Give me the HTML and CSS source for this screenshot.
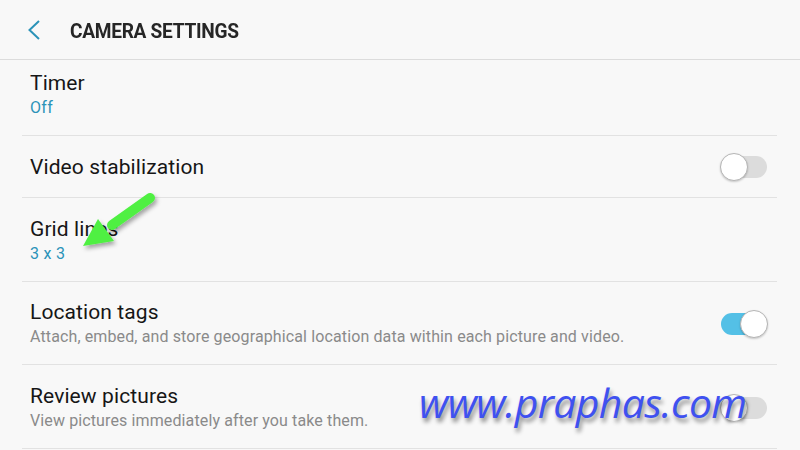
FILE: index.html
```html
<!DOCTYPE html>
<html>
<head>
<meta charset="utf-8">
<link rel="stylesheet" href="styles.css">
</head>
<body>
<div class="screen">
  <header class="appbar">
    <svg class="back" width="14" height="20" viewBox="0 0 14 20"><path d="M12 1 L2.5 10 L12 19" fill="none" stroke="#2b93b8" stroke-width="2"/></svg>
    <h1 class="title">CAMERA SETTINGS</h1>
  </header>
  <div class="list">
    <div class="row first">
      <div class="text">
        <div class="label">Timer</div>
        <div class="value">Off</div>
      </div>
    </div>
    <div class="row single">
      <div class="text">
        <div class="label">Video stabilization</div>
      </div>
      <span class="toggle"><span class="thumb"></span></span>
    </div>
    <div class="row">
      <div class="text">
        <div class="label">Grid lines</div>
        <div class="value">3 x 3</div>
      </div>
    </div>
    <div class="row">
      <div class="text">
        <div class="label">Location tags</div>
        <div class="desc">Attach, embed, and store geographical location data within each picture and video.</div>
      </div>
      <span class="toggle on"><span class="thumb"></span></span>
    </div>
    <div class="row">
      <div class="text">
        <div class="label">Review pictures</div>
        <div class="desc">View pictures immediately after you take them.</div>
      </div>
      <span class="toggle"><span class="thumb"></span></span>
    </div>
  </div>
  <svg class="arrow" width="90" height="70" viewBox="0 0 90 70">
    <defs>
      <filter id="sh" x="-20%" y="-20%" width="150%" height="150%">
        <feDropShadow dx="2" dy="3" stdDeviation="2" flood-color="#000" flood-opacity="0.35"/>
      </filter>
    </defs>
    <g filter="url(#sh)">
      <line x1="70" y1="8" x2="32" y2="35" stroke="#4ff043" stroke-width="10" stroke-linecap="round"/>
      <polygon points="3,56 18,29 34,51" fill="#4ff043"/>
    </g>
  </svg>
  <div class="watermark">www.praphas.com</div>
</div>
</body>
</html>
```
FILE: styles.css
```css
* { box-sizing: border-box; }
html, body { margin: 0; padding: 0; }
body {
  background: #f8f8f8;
  font-family: Roboto, "Noto Sans", sans-serif;
  color: #1a1a1a;
}
.screen {
  position: relative;
  width: 800px;
  height: 450px;
  overflow: hidden;
  background: #f8f8f8;
}
.appbar {
  height: 60px;
  display: flex;
  align-items: center;
  border-bottom: 1px solid #dcdcdc;
  padding-left: 27px;
}
.back { margin-right: 29px; margin-top: 0; }
.title {
  margin: 0;
  font-size: 20px;
  font-weight: 700;
  color: #262626;
  letter-spacing: -0.3px;
  transform: scaleX(0.955);
  transform-origin: left center;
  padding-top: 2px;
}
.list { padding: 0 23px 0 22px; }
.row {
  display: flex;
  align-items: center;
  justify-content: space-between;
  border-bottom: 1px solid #e2e2e2;
  padding: 18.5px 0 16px 8px;
}
.row.first { padding-top: 11px; padding-bottom: 16px; }
.row.single { padding-top: 19px; padding-bottom: 18px; }
.label {
  font-size: 21px;
  line-height: 24px;
  letter-spacing: 0.1px;
  color: #161616;
}
.value {
  font-size: 16px;
  line-height: 22px;
  margin-top: 2px;
  letter-spacing: 0.3px;
  color: #2b93b8;
}
.desc {
  font-size: 16px;
  line-height: 22px;
  margin-top: 2px;
  letter-spacing: 0.12px;
  color: #8a8a8a;
}
.toggle {
  position: relative;
  width: 46px;
  height: 22px;
  border-radius: 11px;
  background: #dcdcdc;
  flex: none;
  margin-right: 10px;
}
.toggle .thumb {
  position: absolute;
  top: -3px;
  left: -1px;
  width: 28px;
  height: 28px;
  border-radius: 50%;
  background: #fff;
  border: 1.5px solid #b5b5b5;
  box-shadow: 0 1px 2px rgba(0,0,0,0.2);
}
.toggle.on { background: #54c0e6; }
.toggle.on .thumb { left: auto; right: -1px; }
.arrow {
  position: absolute;
  left: 80px;
  top: 190px;
}
.watermark {
  position: absolute;
  left: 419px;
  top: 377px;
  font-family: "Open Sans", sans-serif;
  font-style: italic;
  font-size: 41px;
  line-height: 50px;
  color: #3f51f0;
  text-shadow: 2px 4px 4px rgba(0,0,0,0.45);
  letter-spacing: -0.65px;
}
```
